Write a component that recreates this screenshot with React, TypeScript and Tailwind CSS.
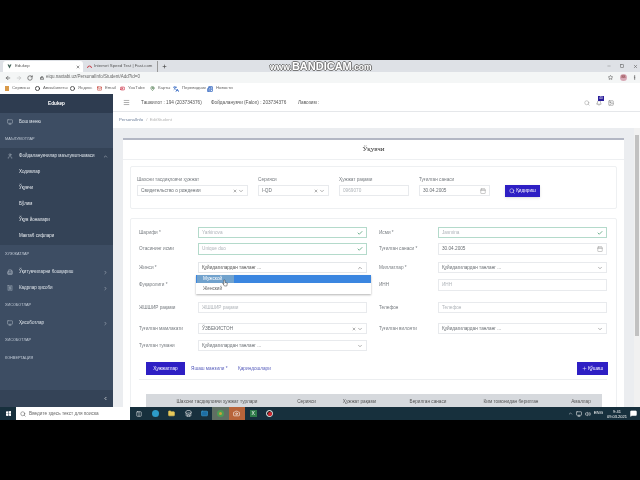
import React from "react";
import { Search, Plus, Check, X, ChevronDown, ChevronUp, ChevronRight, ChevronLeft, Calendar, Menu, ArrowLeft, ArrowRight, RotateCw, Lock, Star, MoreVertical, Monitor, User, Building2, Receipt, Bell, Minus, Square, MapPin, Languages, Volume2, MessageSquare, Columns2, Store, Mail, Folder, Newspaper, Youtube, Camera, Circle, Image } from "lucide-react";

function Bookmark({ icon, text, w }: { icon: React.ReactNode; text: string; w: string }) {
  return <div className={`flex items-center gap-[3px] ${w}`}>{icon}<span className="text-[4.3px] text-[#666] whitespace-nowrap">{text}</span></div>;
}

function SideHead({ text, h }: { text: string; h: string }) {
  return <div className={`${h} flex items-center pl-[5px] text-[3.8px] text-[#c3ccd8]`}>{text}</div>;
}

function SideItem({ icon, text, arrow, h }: { icon: React.ReactNode; text: string; arrow?: React.ReactNode; h: string }) {
  return <div className={`${h} flex items-center pl-[7px] pr-[5px] text-[4.5px] text-[#dfe5eb]`}>
    <span className="w-[12px] text-[#aeb8c4]">{icon}</span><span className="flex-1 whitespace-nowrap">{text}</span>{arrow}
  </div>;
}

function SubItem({ text }: { text: string }) {
  return <div className="h-[16px] flex items-center pl-[19px] text-[4.5px] text-[#e8ecf0]">{text}</div>;
}

function Input({ text, cls, w, ok, select, clear, date, dark }: { text: string; cls?: string; w: string; ok?: boolean; select?: boolean; clear?: boolean; date?: boolean; dark?: boolean }) {
  return <div className={`${w} ${cls ?? "h-[11px]"} flex items-center px-[3px] border bg-white ${ok ? "border-[#b4dacb]" : "border-[#e8eaed]"}`}>
    <span className={`flex-1 whitespace-nowrap text-[4.7px] ${dark ? "text-[#6a6f74]" : "text-[#b0b5ba]"}`}>{text}</span>
    {ok && <Check className="w-[6px] h-[6px] text-[#4a9b70]" strokeWidth={3} />}
    {clear && <X className="w-[4px] h-[4px] text-[#666] mr-[1px]" strokeWidth={3} />}
    {select && <ChevronDown className="w-[6px] h-[6px] text-[#666]" strokeWidth={2} />}
    {date && <Calendar className="w-[6px] h-[6px] text-[#999]" />}
  </div>;
}

function Row({ l, r, h }: { l: React.ReactNode; r: React.ReactNode; h: string }) {
  return <div className={`${h} flex items-start`}>
    <div className="w-[240px] flex">{l}</div>
    <div className="flex">{r}</div>
  </div>;
}

function Lab({ text }: { text: string }) {
  return <div className="w-[59px] h-[11px] flex items-center whitespace-nowrap text-[4.7px] text-[#777c81]">{text}</div>;
}

function SearchField({ label, children, w }: { label: string; children: React.ReactNode; w: string }) {
  return <div className={`${w} flex flex-col`}>
    <div className="h-[10px] flex items-center text-[4.7px] text-[#777c81] whitespace-nowrap">{label}</div>
    {children}
  </div>;
}

function TaskIcon({ children, cls }: { children: React.ReactNode; cls?: string }) {
  return <div className={`w-[16.3px] h-full flex items-center justify-center ${cls ?? ""}`}>{children}</div>;
}

export default function App() {
  return (
    <div className="relative w-[640px] h-[480px] bg-black overflow-hidden flex flex-col pt-[60px] pb-[60px] font-['Liberation_Sans',sans-serif] blur-[0.4px]">
      {/* Tab strip */}
      <div className="h-[12px] shrink-0 bg-[#dee1e6] flex items-end pl-[3px]">
        <div className="w-[80px] h-[11px] bg-white rounded-t-[3px] flex items-center pl-[4px] pr-[3px]">
          <svg viewBox="0 0 10 10" className="w-[5px] h-[5px] mr-[3px]"><path d="M1 1h3l1 3 1-3h3L5 9z" fill="#3f5f55" /></svg>
          <span className="flex-1 text-[4.3px] text-[#555]">Edukep</span>
          <X className="w-[4px] h-[4px] text-[#333]" strokeWidth={3} />
        </div>
        <div className="w-[75px] h-[11px] flex items-center pl-[4px] pr-[3px] border-r border-[#999]">
          <svg viewBox="0 0 10 10" className="w-[5px] h-[5px] mr-[2px]"><path d="M1 8a4 4 0 1 1 8 0" fill="none" stroke="#c9434d" strokeWidth="2" /></svg>
          <span className="flex-1 text-[4.3px] text-[#555] whitespace-nowrap">Internet Speed Test | Fast.com</span>
        </div>
        <Plus className="w-[5px] h-[5px] text-[#444] ml-[4px] mb-[3px]" strokeWidth={3} />
        <div className="ml-auto h-full flex items-center gap-[9px] pr-[1px]">
          <Minus className="w-[4px] h-[4px] text-[#555]" />
          <Square className="w-[4px] h-[4px] text-[#555]" strokeWidth={3} />
          <X className="w-[5px] h-[5px] text-[#555] mr-[1px]" strokeWidth={2.5} />
        </div>
      </div>
      {/* Address bar */}
      <div className="h-[11px] shrink-0 bg-[#f4f6f6] flex items-center pl-[5px] pr-[3px]">
        <ArrowLeft className="w-[6px] h-[6px] text-[#444]" strokeWidth={2.5} />
        <ArrowRight className="w-[6px] h-[6px] text-[#bbb] ml-[5px]" strokeWidth={2.5} />
        <RotateCw className="w-[6px] h-[6px] text-[#444] ml-[5px]" strokeWidth={2.5} />
        <Lock className="w-[4px] h-[4px] text-[#333] ml-[7px]" strokeWidth={3} />
        <span className="text-[4.5px] text-[#666] ml-[2px]">eiqu.naxtabi.uz/PersonalInfo/Student/Add?id=0</span>
        <Star className="w-[5px] h-[5px] text-[#444] ml-auto" strokeWidth={2.5} />
        <div className="w-[7px] h-[7px] rounded-full bg-[#d7a8b5] ml-[7px] flex items-center justify-center text-[3px] text-[#722]">BB</div>
        <MoreVertical className="w-[5px] h-[5px] text-[#555] ml-[5px]" strokeWidth={3} />
      </div>
      {/* Bookmarks */}
      <div className="h-[11px] shrink-0 bg-white flex items-center pl-[5px]">
        <Bookmark w="w-[30px]" text="Сервисы" icon={<div className="w-[4px] h-[5px] bg-[#d99a4a]" />} />
        <Bookmark w="w-[35px]" text="Авиабилеты" icon={<Circle className="w-[5px] h-[5px] text-[#333]" strokeWidth={4} />} />
        <Bookmark w="w-[27px]" text="Яндекс" icon={<Circle className="w-[5px] h-[5px] text-[#444]" strokeWidth={4} />} />
        <Bookmark w="w-[23px]" text="Email" icon={<Mail className="w-[5px] h-[5px] text-[#c5443a]" strokeWidth={3} />} />
        <Bookmark w="w-[30px]" text="YouTube" icon={<Youtube className="w-[5px] h-[5px] text-[#c9223a]" strokeWidth={3} />} />
        <Bookmark w="w-[23px]" text="Карты" icon={<MapPin className="w-[5px] h-[5px] text-[#4d7a4f]" strokeWidth={3} />} />
        <Bookmark w="w-[34px]" text="Переводчик" icon={<Languages className="w-[6px] h-[6px] text-[#3d6fc4]" strokeWidth={3} />} />
        <Bookmark w="w-[30px]" text="Новости" icon={<Newspaper className="w-[6px] h-[6px] text-[#3d6fc4]" strokeWidth={3} />} />
      </div>

      {/* Page */}
      <div className="flex-1 flex min-h-0">
        <aside className="w-[113px] shrink-0 bg-[#3d4d63] flex flex-col">
          <div className="h-[19px] bg-[#2e3c50] flex items-center justify-center text-[4.7px] font-bold text-white">Edukep</div>
          <SideItem h="h-[18px]" text="Бош меню" icon={<Monitor className="w-[6px] h-[6px]" />} />
          <SideHead h="h-[17px]" text="МАЪЛУМОТЛАР" />
          <div className="bg-[#344357] pb-[1px]">
            <SideItem h="h-[16px]" text="Фойдаланувчилар маълумотномаси" icon={<User className="w-[6px] h-[6px]" />} arrow={<ChevronUp className="w-[5px] h-[5px]" />} />
            <SubItem text="Ходимлар" />
            <SubItem text="Ўқувчи" />
            <SubItem text="Бўлим" />
            <SubItem text="Ўқув йоналари" />
            <SubItem text="Мактаб сифлари" />
          </div>
          <SideHead h="h-[19px]" text="ХУЖЖАТЛАР" />
          <SideItem h="h-[16px]" text="Ўқитувчиларни бошқариш" icon={<Building2 className="w-[6px] h-[6px]" />} arrow={<ChevronRight className="w-[5px] h-[5px]" />} />
          <SideItem h="h-[16px]" text="Кадрлар ҳисоби" icon={<Receipt className="w-[6px] h-[6px]" />} arrow={<ChevronRight className="w-[5px] h-[5px]" />} />
          <SideHead h="h-[19px]" text="ХИСОБОТЛАР" />
          <SideItem h="h-[16px]" text="Ҳисоботлар" icon={<Monitor className="w-[6px] h-[6px]" />} arrow={<ChevronRight className="w-[5px] h-[5px]" />} />
          <SideHead h="h-[19px]" text="ХИСОБОТЛАР" />
          <SideHead h="h-[18px]" text="КОНВЕРТАЦИЯ" />
          <div className="flex-1" />
          <div className="h-[17px] bg-[#344357] flex items-center justify-end pr-[5px]"><ChevronLeft className="w-[5px] h-[5px] text-white" strokeWidth={3} /></div>
        </aside>

        <main className="flex-1 min-w-0 flex flex-col">
          <header className="h-[18px] shrink-0 bg-white border-b border-[#e5e7ea] flex items-center pl-[10px] pr-[26px] text-[4.7px] text-[#555]">
            <Menu className="w-[7px] h-[7px] text-[#777]" />
            <span className="ml-[11px] w-[70px] whitespace-nowrap">Ташкилот : 194 (203734376)</span>
            <span className="w-[87px] whitespace-nowrap">Фойдаланувчи (Falon) : 203734376</span>
            <span>Лавозим :</span>
            <Search className="w-[6px] h-[6px] text-[#999] ml-auto" />
            <div className="relative ml-[6px]">
              <Bell className="w-[6px] h-[6px] text-[#777]" />
              <span className="absolute left-[2px] -top-[4px] w-[6px] h-[5px] bg-[#2a1d9b] text-white text-[3px] text-center">40</span>
            </div>
            <Image className="w-[6px] h-[6px] text-[#777] ml-[6px]" />
          </header>
          <div className="h-[16px] shrink-0 bg-white flex items-center pl-[6px] text-[4.3px]">
            <span className="text-[#6d7f9a]">PersonalInfo</span><span className="text-[#b5b5b5] ml-[3px]">/ &nbsp;EditStudent</span>
          </div>

          <div className="flex-1 min-h-0 flex bg-[#ebedf0] overflow-hidden">
            <div className="w-[521px] pt-[10px] pl-[10px] pr-[10px] overflow-hidden">
              <div className="w-[501px] h-[300px] bg-white border-t-2 border-[#b3b7c4] flex flex-col px-[7px] overflow-hidden">
                <div className="h-[20px] -mx-[7px] shrink-0 flex items-center justify-center text-[7px] text-[#333] font-['Liberation_Serif',serif] border-b border-[#eef0f2]">Ўқувчи</div>

                <div className="mt-[6px] h-[43px] shrink-0 border border-[#eef0f2] rounded-[2px] flex items-start pt-[8px] pl-[6px]">
                  <SearchField w="w-[121px]" label="Шахсни тасдиқловчи ҳужжат"><Input dark clear select w="w-[111px]" text="Свидетельство о рождении" /></SearchField>
                  <SearchField w="w-[81px]" label="Серияси"><Input dark clear select w="w-[71px]" text="I-QD" /></SearchField>
                  <SearchField w="w-[80px]" label="Ҳужжат рақами"><Input w="w-[70px]" text="0969070" /></SearchField>
                  <SearchField w="w-[86px]" label="Туғилган санаси"><Input dark date w="w-[71px]" text="30.04.2005" /></SearchField>
                  <div className="mt-[10px] w-[35px] h-[12px] bg-[#2e1fc4] text-white text-[4.7px] flex items-center justify-center gap-[1px] shadow-sm"><Search className="w-[6px] h-[6px]" />Қидириш</div>
                </div>

                <div className="relative mt-[9px] flex-1 border border-[#eef0f2] rounded-[2px] pt-[8px] pl-[8px] pr-[9px]">
                  <Row h="h-[16px]" l={<><Lab text="Шарифи *" /><Input ok w="w-[169px]" text="Yarkinova" /></>} r={<><Lab text="Исми *" /><Input ok w="w-[169px]" text="Jasmina" /></>} />
                  <Row h="h-[19px]" l={<><Lab text="Отасининг исми" /><Input ok cls="h-[12px]" w="w-[169px]" text="Unique duo" /></>} r={<><Lab text="Туғилган санаси *" /><Input dark date cls="h-[12px]" w="w-[169px]" text="30.04.2005" /></>} />
                  <Row h="h-[17px]" l={<><Lab text="Жинси *" /><div className="w-[169px] h-[11px] flex items-center px-[3px] border border-[#e4e7ea]"><span className="flex-1 text-[4.7px] text-[#555]">Қуйидагилардан танланг ...</span><ChevronUp className="w-[6px] h-[6px] text-[#555]" /></div></>} r={<><Lab text="Миллатлар *" /><Input dark select w="w-[169px]" text="Қуйидагилардан танланг ..." /></>} />
                  <Row h="h-[23px]" l={<><Lab text="Фуқаролиги *" /></>} r={<><Lab text="ИНН" /><Input cls="h-[12px]" w="w-[169px]" text="ИНН" /></>} />
                  <Row h="h-[21px]" l={<><Lab text="ЖШШИР рақами" /><Input w="w-[169px]" text="ЖШШИР рақами" /></>} r={<><Lab text="Телефон" /><Input w="w-[169px]" text="Телефон" /></>} />
                  <Row h="h-[17px]" l={<><Lab text="Туғилган мамлакати" /><Input dark clear select w="w-[169px]" text="ЎЗБЕКИСТОН" /></>} r={<><Lab text="Туғилган вилояти" /><Input dark select w="w-[169px]" text="Қуйидагилардан танланг ..." /></>} />
                  <Row h="h-[22px]" l={<><Lab text="Туғилган тумани" /><Input dark select w="w-[169px]" text="Қуйидагилардан танланг ..." /></>} r={null} />

                  <div className="ml-[7px] mr-[-1px] flex items-center h-[13px] text-[4.7px]">
                    <div className="w-[39px] h-full bg-[#2e1fc4] text-white flex items-center justify-center">Ҳужжатлар</div>
                    <span className="ml-[6px] w-[47px] text-[#5a60bd] whitespace-nowrap">Яшаш манзили *</span>
                    <span className="text-[#5a60bd]">Қариндошлари</span>
                    <div className="ml-auto w-[31px] h-[13px] bg-[#2e1fc4] text-white flex items-center justify-center gap-[1px]"><Plus className="w-[5px] h-[5px]" />Қўшиш</div>
                  </div>
                  <div className="mt-[4px] h-px bg-[#eceef0]" />
                  <div className="mt-[14px] ml-[7px] w-[456px] h-[20px] bg-[#d6d9dd] grid grid-cols-[142px_37px_69px_68px_98px_42px] pt-[4px] text-[4.7px] text-[#555] text-center whitespace-nowrap">
                    <span>Шахсни тасдиқловчи ҳужжат турлари</span>
                    <span>Серияси</span>
                    <span>Ҳужжат рақами</span>
                    <span>Берилган санаси</span>
                    <span>Ким томонидан берилган</span>
                    <span>Амаллар</span>
                  </div>

                  {/* dropdown */}
                  <div className="absolute left-[65px] top-[56px] w-[175px] h-[19px] bg-white shadow-[0_1px_2px_rgba(0,0,0,0.3)] text-[4.7px]">
                    <div className="relative h-[8px] bg-[#3b86e0] text-white flex items-center pl-[7px]">
                      <div className="absolute left-[1px] top-0 w-[37px] h-[8px] bg-[#d8d6a8]/35" />
                      <span className="relative z-10">Мужской</span>
                    </div>
                    <div className="h-[11px] flex items-center pl-[7px] text-[#666]">Женский</div>
                    <svg viewBox="0 0 10 12" className="absolute z-20 left-[26px] top-[4px] w-[6px] h-[8px]"><path d="M3 1v7L1 6l3 5h4l1-5-4-1V1z" fill="#fff" stroke="#333" strokeWidth="0.8" /></svg>
                  </div>
                </div>
              </div>
            </div>
            <div className="w-[6px] bg-[#f1f1f1] ml-auto flex flex-col items-stretch pt-[7px]">
              <div className="h-[201px] bg-[#c1c1c1] mx-[1px]" />
            </div>
          </div>
        </main>
      </div>

      {/* Taskbar */}
      <div className="h-[13px] shrink-0 bg-[#17303d] flex items-center">
        <div className="w-[16px] h-full flex items-center justify-center">
          <svg viewBox="0 0 10 10" className="w-[5px] h-[5px]"><path d="M0 1l4-.5V5H0zM5 .4 10 0v5H5zM0 5.5h4V10l-4-.5zM5 5.5h5V10l-5-.5z" fill="#fff" /></svg>
        </div>
        <div className="w-[114px] h-full bg-white flex items-center pl-[4px] gap-[3px]">
          <Search className="w-[6px] h-[6px] text-[#555]" />
          <span className="text-[4.7px] text-[#666] whitespace-nowrap">Введите здесь текст для поиска</span>
        </div>
        <TaskIcon cls="ml-[1px]"><Columns2 className="w-[6px] h-[6px] text-white" /></TaskIcon>
        <TaskIcon><div className="w-[7px] h-[7px] rounded-full bg-[#2d9bc9]" /></TaskIcon>
        <TaskIcon><Folder className="w-[7px] h-[7px] text-[#e8c95a]" fill="#e8c95a" /></TaskIcon>
        <TaskIcon><Store className="w-[7px] h-[7px] text-white" /></TaskIcon>
        <TaskIcon><Mail className="w-[7px] h-[7px] text-[#3fa5de]" fill="#1c6ea4" /></TaskIcon>
        <TaskIcon cls="bg-[#5f6f63]"><div className="w-[7px] h-[7px] rounded-full bg-[#c9a23a] border-2 border-[#4d9a55]" /></TaskIcon>
        <TaskIcon cls="bg-[#b8643a]"><Camera className="w-[7px] h-[7px] text-white" /></TaskIcon>
        <TaskIcon><div className="w-[7px] h-[7px] bg-[#2e7b4a] text-white text-[5px] leading-[7px] text-center">X</div></TaskIcon>
        <TaskIcon><div className="w-[7px] h-[7px] rounded-full bg-[#222] border border-white flex items-center justify-center"><div className="w-[4px] h-[4px] rounded-full bg-[#d9262e]" /></div></TaskIcon>
        <div className="ml-auto flex items-center text-white">
          <ChevronUp className="w-[5px] h-[5px]" />
          <Monitor className="w-[6px] h-[6px] ml-[3px]" />
          <Volume2 className="w-[6px] h-[6px] ml-[3px]" />
          <span className="text-[4.3px] ml-[3px]">ENG</span>
          <div className="ml-[4px] w-[20px] flex flex-col items-center text-[4px] leading-[5px]"><span>9:41</span><span>09.03.2021</span></div>
          <MessageSquare className="w-[7px] h-[7px] ml-[3px] mr-[3px]" fill="#fff" />
        </div>
      </div>

      {/* Recording watermark */}
      <div className="absolute left-[270px] top-[61px] text-[11px] leading-[11px] font-bold text-white whitespace-nowrap [text-shadow:-1px_0_#777,1px_0_#777,0_-1px_#777,0_1px_#777]">
        <span className="text-[8.5px]">www.</span>BANDICAM<span className="text-[8.5px]">.com</span>
      </div>
    </div>
  );
}
